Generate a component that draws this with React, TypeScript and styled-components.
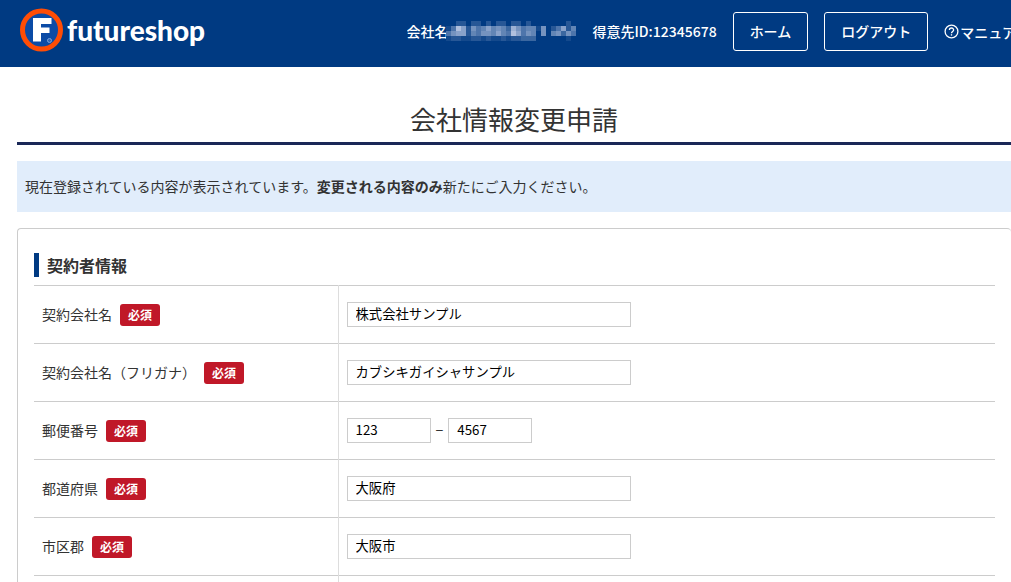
import React from "react";
import styled, { createGlobalStyle } from "styled-components";

const Global = createGlobalStyle`
  *, *::before, *::after { box-sizing: border-box; }
  body {
    margin: 0;
    background: #fff;
    color: #333;
    font-family: "Noto Sans CJK JP", sans-serif;
    font-size: 14px;
    line-height: 20px;
    overflow-x: hidden;
  }
`;

const Header = styled.header`
  display: flex;
  align-items: center;
  justify-content: space-between;
  height: 67px;
  padding: 0 0 4px 20px;
  background: #003a82;
  color: #fff;
`;

const Brand = styled.a`
  display: flex;
  align-items: center;
  gap: 4px;
  padding-bottom: 3px;
  color: #fff;
  text-decoration: none;
  font: 900 28px/32px Lato, sans-serif;
`;

const Nav = styled.nav`
  display: flex;
  align-items: center;
  flex: 0 0 61%;
  gap: 16px;
  overflow: hidden;
  white-space: nowrap;
  font-weight: 500;
`;

const Account = styled.span`
  display: flex;
  align-items: center;
  padding-bottom: 2px;
`;

const Mask = styled.svg`
  margin: 0 1px 0 -3px;
`;

const NavButton = styled.button`
  flex: none;
  height: 39px;
  padding: 0 16px 2px;
  border: 1px solid #fff;
  border-radius: 3px;
  background: transparent;
  color: #fff;
  font: inherit;
`;

const ManualLink = styled.a`
  display: flex;
  align-items: center;
  gap: 1px;
  color: #fff;
  text-decoration: none;
`;

const Main = styled.main`
  padding: 35px 0 0 17px;
`;

const Title = styled.h1`
  margin: 0 0 16px;
  padding-bottom: 7px;
  border-bottom: 3px solid #1a2857;
  text-align: center;
  font-size: 26px;
  line-height: 33px;
  font-weight: 400;
`;

const Notice = styled.p`
  margin: 0 0 16px;
  padding: 15px 8px 16px;
  background: #e1edfb;
`;

const Card = styled.section`
  padding: 24px 16px 0;
  border: 1px solid #ccc;
  border-right: 0;
  border-radius: 4px;
`;

const SectionTitle = styled.h2`
  margin: 0 0 8px;
  padding-left: 8px;
  border-left: 5px solid #003a82;
  font-size: 16px;
  line-height: 24px;
  font-weight: 700;
`;

const FormTable = styled.table`
  width: 100%;
  border-collapse: collapse;
  table-layout: fixed;
`;

const Row = styled.tr`
  height: 58px;
  border-top: 1px solid #ccc;
`;

const LabelCell = styled.th`
  width: 304px;
  padding: 0 8px;
  border-right: 1px solid #ddd;
  text-align: left;
  font-weight: 400;
`;

const LabelLine = styled.div`
  display: flex;
  align-items: center;
  gap: 8px;
`;

const FieldLabel = styled.label`
  padding-bottom: 2px;
`;

const Required = styled.span`
  padding: 1px 8px;
  border-radius: 3px;
  background: #c01828;
  color: #fff;
  font-size: 12px;
  font-weight: 700;
`;

const FieldCell = styled.td`
  padding: 0 8px;
`;

const FieldLine = styled.div`
  display: flex;
  align-items: center;
  gap: 5px;
`;

const Dash = styled.span`
  padding-bottom: 2px;
`;

const TextInput = styled.input<{ $short?: boolean }>`
  width: ${(p) => (p.$short ? 84 : 284)}px;
  height: 25px;
  padding: 0 8px 2px;
  border: 1px solid #ccc;
  background: #fff;
  color: #000;
  font-family: inherit;
`;

const rows = [
  { id: "company", label: "契約会社名", values: ["株式会社サンプル"] },
  { id: "kana", label: "契約会社名（フリガナ）", values: ["カブシキガイシャサンプル"] },
  { id: "zip", label: "郵便番号", values: ["123", "4567"] },
  { id: "pref", label: "都道府県", values: ["大阪府"] },
  { id: "city", label: "市区郡", values: ["大阪市"] },
];

/* Masked company name: one digit per tile, 0 = clear, 9 = lightest. */
const mask = [
  "00220220202202202000000020",
  "14972645756538645516024725",
  "46772546657549746506056364",
  "12211221211212233300000010",
];

function MaskedName() {
  return (
    <Mask width="130" height="20" role="img" aria-label="非表示" shapeRendering="crispEdges">
      <rect width="130" height="20" fill="#003a82" />
      {mask.flatMap((line, y) =>
        line.split("").map((level, x) => (
          <rect key={`${x}-${y}`} x={x * 5} y={y * 5} width="5" height="5" fill="#c3cfe8" opacity={Number(level) / 10} />
        ))
      )}
    </Mask>
  );
}

function LogoMark() {
  return (
    <svg width="43" height="44" viewBox="0 0 43 44" aria-hidden="true">
      <circle cx="21.5" cy="22" r="19" fill="#0b4ba6" stroke="#ff4d05" strokeWidth="5" />
      <path d="M13 10H31.5V16H21V19.5H29.5V25H21V33.5H13Z" fill="#fff" />
      <circle cx="29.5" cy="32.5" r="2" fill="#2c66b8" stroke="#7fa5da" />
    </svg>
  );
}

function HelpIcon() {
  return (
    <svg width="15" height="15" viewBox="0 0 15 15" fill="none" stroke="#fff" strokeWidth="1.3" aria-hidden="true">
      <circle cx="7.5" cy="7.5" r="6.4" />
      <path d="M5.4 6.1C5.4 3.3 9.6 3.3 9.6 6C9.6 7.4 7.5 7.5 7.5 9.2" />
      <path d="M7.5 10.2V11.6" />
    </svg>
  );
}

export default function App() {
  return (
    <>
      <Global />
      <Header>
        <Brand href="#">
          <LogoMark />
          futureshop
        </Brand>
        <Nav>
          <Account>
            会社名
            <MaskedName />
          </Account>
          <Account>得意先ID:12345678</Account>
          <NavButton type="button">ホーム</NavButton>
          <NavButton type="button">ログアウト</NavButton>
          <ManualLink href="#">
            <HelpIcon />
            マニュアル
          </ManualLink>
        </Nav>
      </Header>
      <Main>
        <Title>会社情報変更申請</Title>
        <Notice>
          現在登録されている内容が表示されています。<strong>変更される内容のみ</strong>新たにご入力ください。
        </Notice>
        <Card>
          <SectionTitle>契約者情報</SectionTitle>
          <FormTable>
            <tbody>
              {rows.map((row) => (
                <Row key={row.id}>
                  <LabelCell scope="row">
                    <LabelLine>
                      <FieldLabel htmlFor={row.id}>{row.label}</FieldLabel>
                      <Required>必須</Required>
                    </LabelLine>
                  </LabelCell>
                  <FieldCell>
                    <FieldLine>
                      {row.values.map((value, i) => (
                        <React.Fragment key={i}>
                          {i > 0 && <Dash>−</Dash>}
                          <TextInput
                            id={i === 0 ? row.id : `${row.id}-${i}`}
                            aria-label={i > 0 ? `${row.label} ${i + 1}` : undefined}
                            $short={row.values.length > 1}
                            defaultValue={value}
                          />
                        </React.Fragment>
                      ))}
                    </FieldLine>
                  </FieldCell>
                </Row>
              ))}
              <Row aria-hidden="true">
                <LabelCell as="td" />
                <FieldCell />
              </Row>
            </tbody>
          </FormTable>
        </Card>
      </Main>
    </>
  );
}
